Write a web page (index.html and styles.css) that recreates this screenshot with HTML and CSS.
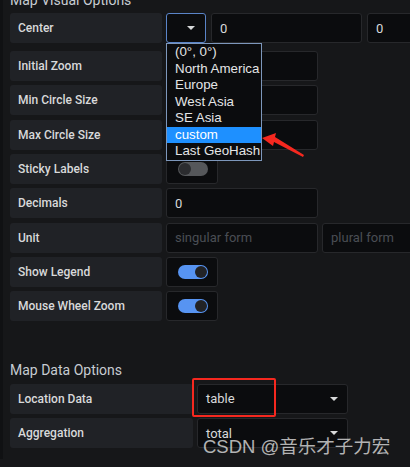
FILE: index.html
```html
<!DOCTYPE html>
<html>
<head>
<meta charset="utf-8">
<link rel="stylesheet" href="styles.css">
</head>
<body>
<div class="page">
  <h3 class="section-title top">Map Visual Options</h3>

  <div class="row row-center">
    <div class="label">Center</div>
    <div class="select select-small focused">
      <span class="caret"></span>
      <ul class="listbox">
        <li>(0°, 0°)</li>
        <li>North America</li>
        <li>Europe</li>
        <li>West Asia</li>
        <li>SE Asia</li>
        <li class="active">custom</li>
        <li>Last GeoHash</li>
      </ul>
    </div>
    <div class="input w151">0</div>
    <div class="input w151">0</div>
  </div>

  <div class="stack">
    <div class="row">
      <div class="label">Initial Zoom</div>
      <div class="input w152"></div>
    </div>
    <div class="row">
      <div class="label">Min Circle Size</div>
      <div class="input w152"></div>
    </div>
    <div class="row">
      <div class="label">Max Circle Size</div>
      <div class="input w152"></div>
    </div>
    <div class="row">
      <div class="label">Sticky Labels</div>
      <div class="switch-box"><span class="switch off"><span class="knob"></span></span></div>
    </div>
    <div class="row">
      <div class="label">Decimals</div>
      <div class="input w152">0</div>
    </div>
    <div class="row">
      <div class="label">Unit</div>
      <div class="input w152 placeholder">singular form</div>
      <div class="input w151 placeholder">plural form</div>
    </div>
    <div class="row">
      <div class="label">Show Legend</div>
      <div class="switch-box"><span class="switch on"><span class="knob"></span></span></div>
    </div>
    <div class="row">
      <div class="label">Mouse Wheel Zoom</div>
      <div class="switch-box"><span class="switch on"><span class="knob"></span></span></div>
    </div>
  </div>

  <h3 class="section-title second">Map Data Options</h3>

  <div class="stack">
    <div class="row">
      <div class="label wide">Location Data</div>
      <div class="select select-wide">table<span class="caret"></span></div>
    </div>
    <div class="row">
      <div class="label wide">Aggregation</div>
      <div class="select select-wide">total<span class="caret"></span></div>
    </div>
  </div>
</div>

<svg class="red-arrow" width="50" height="26" viewBox="0 0 50 26">
  <polygon points="1,5 15,0 14,4 43,22 42,24 13,9 12,13" fill="#f5281f"/>
</svg>
<div class="red-box"></div>
<div class="watermark">CSDN @音乐才子力宏</div>
</body>
</html>
```

FILE: styles.css
```css
html, body {
  margin: 0;
  padding: 0;
  background: #161719;
  width: 410px;
  height: 467px;
  overflow: hidden;
}

body {
  position: relative;
  font-family: Roboto, "Liberation Sans", sans-serif;
  color: #d8d9da;
}

.page {
  border-left: 3px solid #101113;
  padding-left: 7px;
  height: 467px;
  box-sizing: border-box;
}

.section-title {
  margin: 0;
  font-size: 14px;
  font-weight: 400;
  line-height: 16px;
  color: #c7ccd2;
  height: 16px;
}

.section-title.top {
  margin-top: -8px;
  margin-bottom: 5px;
}

.section-title.second {
  margin-top: 41px;
  margin-bottom: 5.5px;
}

.stack {
  display: flex;
  flex-direction: column;
  gap: 4.33px;
}

.row {
  display: flex;
  gap: 4px;
  height: 30px;
  flex-wrap: nowrap;
}

.row-center {
  gap: 5px;
  margin-bottom: 8px;
}

.row-center .label {
  margin-right: -1px;
}

.label {
  flex: 0 0 152px;
  box-sizing: border-box;
  background: #202226;
  border-radius: 3px;
  padding-left: 8px;
  display: flex;
  align-items: center;
  font-size: 12px;
  font-weight: 500;
  color: #d8d9da;
}

.label.wide {
  flex-basis: 183px;
}

.input, .select, .switch-box {
  box-sizing: border-box;
  background: #0b0c0e;
  border: 1px solid #27282b;
  border-radius: 3px;
  display: flex;
  align-items: center;
  padding-left: 8px;
  font-size: 13px;
  color: #d8d9da;
  flex-shrink: 0;
}

.w152 { width: 152px; }
.w151 { width: 151px; }

.placeholder {
  color: #4a4e54;
}

.select {
  position: relative;
}

.select-small {
  width: 40px;
}

.select.focused {
  border-color: #5a84c8;
}

.select-wide {
  width: 151px;
}

.caret {
  position: absolute;
  right: 9px;
  top: 50%;
  margin-top: -2px;
  width: 0;
  height: 0;
  border-left: 4px solid transparent;
  border-right: 4px solid transparent;
  border-top: 4px solid #d8d9da;
}

.select-small .caret {
  right: 10px;
}

.listbox {
  position: absolute;
  left: -1px;
  top: 29px;
  z-index: 5;
  margin: 0;
  padding: 0;
  list-style: none;
  width: 96px;
  box-sizing: border-box;
  background: #0b0c0e;
  border: 1px solid #7d97bb;
  font-family: "Liberation Sans", Arial, sans-serif;
  font-size: 13.33px;
  color: #e4e5e6;
}

.listbox li {
  height: 16.5px;
  line-height: 16.5px;
  padding-left: 8px;
  white-space: nowrap;
}

.listbox li.active {
  background: #1e90ff;
  color: #ffffff;
}

.switch-box {
  width: 52px;
  padding-left: 11px;
}

.switch {
  position: relative;
  display: block;
  width: 30px;
  height: 14px;
  border-radius: 7px;
}

.switch.on {
  background: #5794f2;
}

.switch.off {
  background: #55575a;
}

.knob {
  position: absolute;
  top: 1px;
  width: 12px;
  height: 12px;
  border-radius: 50%;
  background: #222326;
}

.switch.on .knob {
  right: 1px;
}

.switch.off .knob {
  left: 1px;
  background: #2b2c2f;
}

.red-arrow {
  position: absolute;
  left: 261px;
  top: 133px;
}

.red-box {
  position: absolute;
  left: 192px;
  top: 378px;
  width: 84px;
  height: 39px;
  box-sizing: border-box;
  border: 2px solid #f5281f;
  border-radius: 2px;
}

.watermark {
  position: absolute;
  left: 203px;
  top: 436px;
  font-family: "Liberation Sans", "Noto Sans CJK SC", sans-serif;
  font-size: 18.5px;
  line-height: 22px;
  color: rgba(225, 225, 225, 0.78);
  white-space: nowrap;
}
```
